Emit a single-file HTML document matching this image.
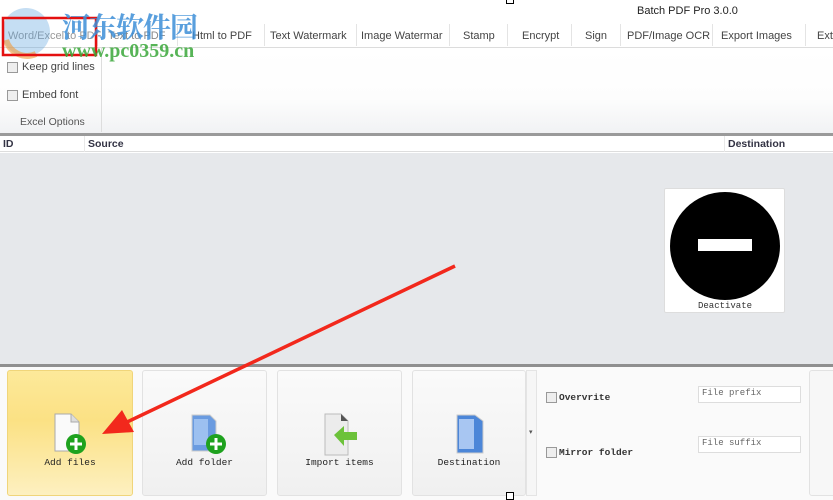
<!DOCTYPE html>
<html><head><meta charset="utf-8"><style>
*{margin:0;padding:0;box-sizing:border-box}
body{width:833px;height:500px;overflow:hidden;background:#fff;font-family:"Liberation Sans","Noto Sans CJK SC",sans-serif;position:relative;font-size:11px;color:#333}
.a{position:absolute}
.tab{position:absolute;top:30px;font-size:11px;color:#444;white-space:nowrap}
.sep{position:absolute;top:24px;width:1px;height:22px;background:#e4e4e4}
.cb{position:absolute;width:11px;height:11px;border:1px solid #999;background:#eee}
.btn{position:absolute;top:370px;height:126px;border:1px solid #e2e2e2;border-radius:3px;background:linear-gradient(#fafafa,#f0f0f0)}
.bl{position:absolute;top:86px;width:100%;text-align:center;font-family:"Liberation Mono",monospace;font-size:9.5px;color:#222}
.mono{font-family:"Liberation Mono",monospace;font-size:9.5px;color:#333}
</style></head><body>
<div class="a" style="left:637px;top:5px;font-size:11px;color:#222">Batch PDF Pro 3.0.0</div>
<div class="a" style="left:506px;top:-3px;width:8px;height:7px;border:1px solid #000;background:#fff"></div>
<div class="tab" style="left:8px;color:#999">Word/Excel to PDF</div>
<div class="sep" style="left:97px"></div>
<div class="tab" style="left:108px;color:#888">Text to PDF</div>
<div class="sep" style="left:177px"></div>
<div class="tab" style="left:192px">Html to PDF</div>
<div class="sep" style="left:264px"></div>
<div class="tab" style="left:270px">Text Watermark</div>
<div class="sep" style="left:356px"></div>
<div class="tab" style="left:361px">Image Watermar</div>
<div class="sep" style="left:449px"></div>
<div class="tab" style="left:463px">Stamp</div>
<div class="sep" style="left:507px"></div>
<div class="tab" style="left:522px">Encrypt</div>
<div class="sep" style="left:571px"></div>
<div class="tab" style="left:585px">Sign</div>
<div class="sep" style="left:620px"></div>
<div class="tab" style="left:627px">PDF/Image OCR</div>
<div class="sep" style="left:712px"></div>
<div class="tab" style="left:721px">Export Images</div>
<div class="sep" style="left:805px"></div>
<div class="tab" style="left:817px">Ext</div>
<div class="a" style="left:0;top:47px;width:833px;height:86px;background:linear-gradient(#fff,#fdfdfd 60%,#f1f2f4);border-top:1px solid #dcdcdc"></div>
<div class="a" style="left:101px;top:48px;width:1px;height:84px;background:#ddd"></div>
<div class="cb" style="left:7px;top:62px"></div><div class="a" style="left:22px;top:61px;font-size:11px;color:#444">Keep grid lines</div>
<div class="cb" style="left:7px;top:90px"></div><div class="a" style="left:22px;top:89px;font-size:11px;color:#444">Embed font</div>
<div class="a" style="left:20px;top:116px;font-size:10.5px;color:#555">Excel Options</div>
<div class="a" style="left:0;top:133px;width:833px;height:3px;background:#9a9a9a"></div>
<div class="a" style="left:0;top:136px;width:833px;height:16px;background:#fff;border-bottom:1px solid #ddd"></div>
<div class="a" style="left:84px;top:136px;width:1px;height:16px;background:#e8e8e8"></div>
<div class="a" style="left:724px;top:136px;width:1px;height:16px;background:#e8e8e8"></div>
<div class="a" style="left:3px;top:138px;font-size:10.5px;font-weight:bold;color:#334">ID</div>
<div class="a" style="left:88px;top:138px;font-size:10.5px;font-weight:bold;color:#334">Source</div>
<div class="a" style="left:728px;top:138px;font-size:10.5px;font-weight:bold;color:#334">Destination</div>
<div class="a" style="left:0;top:153px;width:833px;height:211px;background:#e6e8eb"></div>
<div class="a" style="left:664px;top:188px;width:121px;height:125px;background:#fff;border:1px solid #ddd;border-radius:2px"></div>
<div class="a" style="left:670px;top:192px;width:110px;height:108px;border-radius:50%;background:#000"></div>
<div class="a" style="left:698px;top:239px;width:54px;height:12px;background:#fff"></div>
<div class="a mono" style="left:698px;top:301px;font-size:9px">Deactivate</div>
<div class="a" style="left:0;top:364px;width:833px;height:3px;background:#8f8f8f"></div>
<div class="a" style="left:0;top:367px;width:833px;height:133px;background:#fafafa"></div>
<div class="btn" style="left:7px;width:126px;background:linear-gradient(#fde99a,#fbe184 40%,#fdf0c0);border-color:#f0d57a">
<svg class="a" style="left:46px;top:42px" width="32" height="42"><path d="M1 1h16l8 8v29H1z" fill="#fafafa" stroke="#aaa"/><path d="M17 1v8h8" fill="#ddd" stroke="#aaa"/><circle cx="22" cy="31" r="10" fill="#1ea21e"/><path d="M22 25v12M16 31h12" stroke="#fff" stroke-width="3"/></svg>
<div class="bl">Add files</div></div>
<div class="btn" style="left:142px;width:125px">
<svg class="a" style="left:47px;top:42px" width="36" height="42"><path d="M2 2h18l6 6v30H2z" fill="#6a9be0" stroke="#ccc"/><path d="M4 6h14v26H4z" fill="#9cc0f0"/><circle cx="26" cy="31" r="10" fill="#1ea21e"/><path d="M26 25v12M20 31h12" stroke="#fff" stroke-width="3"/></svg>
<div class="bl">Add folder</div></div>
<div class="btn" style="left:277px;width:125px">
<svg class="a" style="left:44px;top:42px" width="40" height="44"><path d="M3 1h16l7 7v34H3z" fill="#ececec" stroke="#bbb"/><path d="M19 1v7h7" fill="#555"/><path d="M12 22l10-9v6h13v8H22v6z" fill="#6cc23a"/></svg>
<div class="bl">Import items</div></div>
<div class="btn" style="left:412px;width:114px">
<svg class="a" style="left:42px;top:42px" width="32" height="44"><path d="M2 2h18l8 6v32H2z" fill="#4c86d8" stroke="#ccc"/><path d="M4 6h15v30H4z" fill="#a8c6f2"/></svg>
<div class="bl">Destination</div></div>
<div class="a" style="left:526px;top:370px;width:11px;height:126px;border:1px solid #e4e4e4;background:#f6f6f6"></div>
<div class="a" style="left:529px;top:428px;font-size:7px;color:#555">▾</div>
<div class="cb" style="left:546px;top:392px"></div><div class="a mono" style="left:559px;top:392px;font-weight:bold">Overvrite</div>
<div class="cb" style="left:546px;top:447px"></div><div class="a mono" style="left:559px;top:447px;font-weight:bold">Mirror folder</div>
<div class="a mono" style="left:698px;top:386px;width:103px;height:17px;border:1px solid #ddd;background:#fff;padding:1px 3px;font-size:9px;color:#666">File prefix</div>
<div class="a mono" style="left:698px;top:436px;width:103px;height:17px;border:1px solid #ddd;background:#fff;padding:1px 3px;font-size:9px;color:#666">File suffix</div>
<div class="a" style="left:809px;top:370px;width:30px;height:126px;border:1px solid #e2e2e2;border-radius:3px;background:#f7f7f7"></div>
<div class="a" style="left:506px;top:492px;width:8px;height:8px;border:1px solid #000;background:#fff"></div>
<svg class="a" style="left:0;top:0" width="833" height="500">
<circle cx="26" cy="32" r="24" fill="#5aa0dc" opacity=".35"/><path d="M6 40a22 22 0 0 0 30 14" stroke="#f09a3a" stroke-width="6" fill="none" opacity=".6"/>
<rect x="3" y="18" width="93" height="37" fill="none" stroke="#e41010" stroke-width="2.5"/>
<line x1="455" y1="266" x2="125" y2="423" stroke="#f2281c" stroke-width="3.5"/>
<path d="M102 434l20-24 12 22z" fill="#f2281c"/>
</svg>
<div class="a" style="left:62px;top:6px;font-family:'Noto Serif CJK SC',serif;font-weight:bold;font-size:28px;color:#3d8fd8;opacity:.85;letter-spacing:-1px">河东软件园</div>
<div class="a" style="left:62px;top:40px;font-family:'Liberation Serif',serif;font-weight:bold;font-size:20px;color:#3aa83a;opacity:.85">www.pc0359.cn</div>
</body></html>
